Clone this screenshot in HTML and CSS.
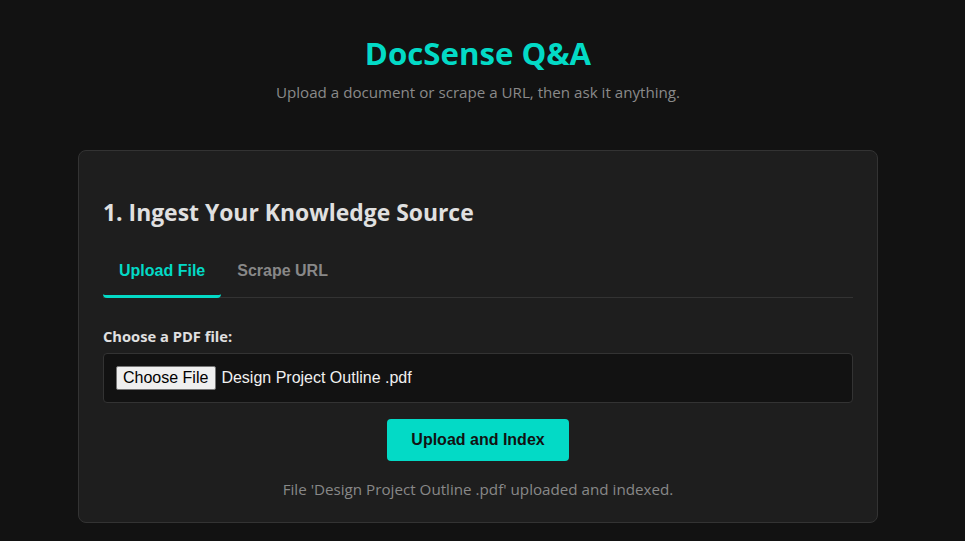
FILE: index.html
```html
<!DOCTYPE html>
<html lang="en">
<head>
<meta charset="utf-8">
<title>DocSense Q&amp;A</title>
<link rel="stylesheet" href="styles.css">
</head>
<body>
  <div class="page">
    <header class="header">
      <h1 class="title">DocSense Q&amp;A</h1>
      <p class="subtitle">Upload a document or scrape a URL, then ask it anything.</p>
    </header>

    <section class="card">
      <h2 class="card-title">1. Ingest Your Knowledge Source</h2>
      <div class="tabs">
        <button class="tab tab-active" type="button">Upload File</button>
        <button class="tab" type="button">Scrape URL</button>
      </div>

      <label class="field-label">Choose a PDF file:</label>
      <div class="file-box">
        <span class="file-btn">Choose File</span>
        <span class="file-name">Design Project Outline .pdf</span>
      </div>

      <button class="primary-btn" type="button">Upload and Index</button>

      <p class="status">File 'Design Project Outline .pdf' uploaded and indexed.</p>
    </section>
  </div>
</body>
</html>
```

FILE: styles.css
```css
* {
  box-sizing: border-box;
}

html, body {
  margin: 0;
  background: #121212;
}

body {
  font-family: "Open Sans", "Noto Sans", sans-serif;
  color: #e0e0e0;
  padding: 33px 9px 40px 0;
}

.page {
  width: 800px;
  margin: 0 auto;
}

.header {
  text-align: center;
}

.title {
  margin: 0;
  font-size: 31.2px;
  line-height: 40px;
  font-weight: 700;
  color: #03dac6;
}

.subtitle {
  margin: 8px 0 0;
  font-size: 15.15px;
  line-height: 22px;
  color: #8a8a8a;
}

.card {
  margin-top: 47px;
  background: #1e1e1e;
  border: 1px solid #333;
  border-radius: 8px;
  padding: 24px 24px 23px;
}

.card-title {
  margin: 23px 0 0;
  font-size: 22.9px;
  line-height: 30px;
  font-weight: 700;
  color: #e0e0e0;
}

.tabs {
  display: flex;
  margin-top: 19px;
  border-bottom: 1px solid #333;
}

.tab {
  font-family: "Liberation Sans", Arial, sans-serif;
  font-size: 16px;
  font-weight: 700;
  line-height: 18px;
  padding: 15px 16px;
  margin-bottom: -1px;
  background: transparent;
  border: none;
  border-bottom: 3px solid transparent;
  border-radius: 4px;
  color: #888;
}

.tab-active {
  color: #03dac6;
  border-bottom-color: #03dac6;
}

.field-label {
  display: block;
  margin-top: 28px;
  font-size: 14.7px;
  line-height: 20px;
  font-weight: 700;
  color: #e0e0e0;
}

.file-box {
  display: flex;
  align-items: center;
  gap: 5px;
  margin-top: 7px;
  padding: 12px;
  background: #121212;
  border: 1px solid #333;
  border-radius: 4px;
  font-family: "Liberation Sans", Arial, sans-serif;
  font-size: 16px;
  line-height: 18px;
}

.file-btn {
  display: inline-block;
  padding: 2px 7px 2px 6px;
  background: #efefef;
  border: 1px solid #767676;
  border-radius: 2px;
  color: #000;
}

.file-name {
  color: #f0f0f0;
}

.primary-btn {
  display: block;
  margin: 16px auto 0;
  padding: 12px 24px;
  font-family: "Liberation Sans", Arial, sans-serif;
  font-size: 16px;
  line-height: 18px;
  font-weight: 700;
  color: #121212;
  background: #03dac6;
  border: none;
  border-radius: 4px;
}

.status {
  margin: 18px 0 0;
  text-align: center;
  font-size: 15.2px;
  line-height: 20px;
  color: #888;
}
```
